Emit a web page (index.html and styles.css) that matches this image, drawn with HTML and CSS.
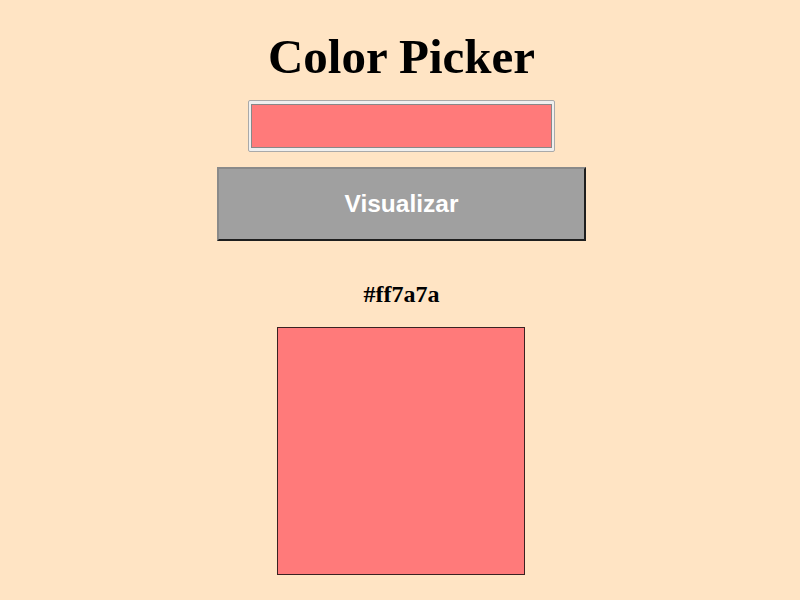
FILE: index.html
```html
<!DOCTYPE html>
<html lang="pt">
<head>
<meta charset="utf-8">
<title>Color Picker</title>
<link rel="stylesheet" href="styles.css">
</head>
<body>
<main class="app">
  <h1 class="title">Color Picker</h1>
  <input class="picker" type="color" value="#ff7a7a">
  <button class="show-btn" type="button">Visualizar</button>
  <h2 class="hex">#ff7a7a</h2>
  <div class="preview" style="background-color: #ff7a7a;"></div>
</main>
</body>
</html>
```

FILE: styles.css
```css
html, body {
  margin: 0;
  padding: 0;
  background: #ffe4c4;
}

body {
  font-family: "Liberation Serif", "Times New Roman", serif;
  color: #000;
}

.app {
  display: flex;
  flex-direction: column;
  align-items: center;
  padding: 27px 0 0 3px;
}

.title {
  margin: 0;
  font-size: 49px;
  line-height: 59px;
  font-weight: bold;
}

.picker {
  margin: 14px 0 0;
  box-sizing: border-box;
  width: 307px;
  height: 52px;
  padding: 0;
  border: 1px solid #a9a9a9;
  border-radius: 2px;
  background: #efefef;
  cursor: pointer;
}

.picker::-webkit-color-swatch-wrapper {
  padding: 3px 2px;
}

.picker::-webkit-color-swatch {
  border: 1px solid #888;
  border-radius: 0;
}

.show-btn {
  margin: 15px 0 0;
  box-sizing: border-box;
  width: 369px;
  height: 74px;
  background: #a0a0a0;
  border-style: solid;
  border-width: 2px;
  border-color: #8a8a8a #1e1e1e #1e1e1e #8a8a8a;
  color: #fff;
  font-family: "Liberation Sans", Arial, sans-serif;
  font-weight: bold;
  font-size: 24.5px;
  padding: 0;
  cursor: pointer;
}

.hex {
  margin: 39px 0 0;
  font-size: 24px;
  line-height: 28px;
  font-weight: bold;
}

.preview {
  margin: 19px 2px 0 0;
  box-sizing: border-box;
  width: 248px;
  height: 248px;
  border: 1px solid #3a2222;
}
```
